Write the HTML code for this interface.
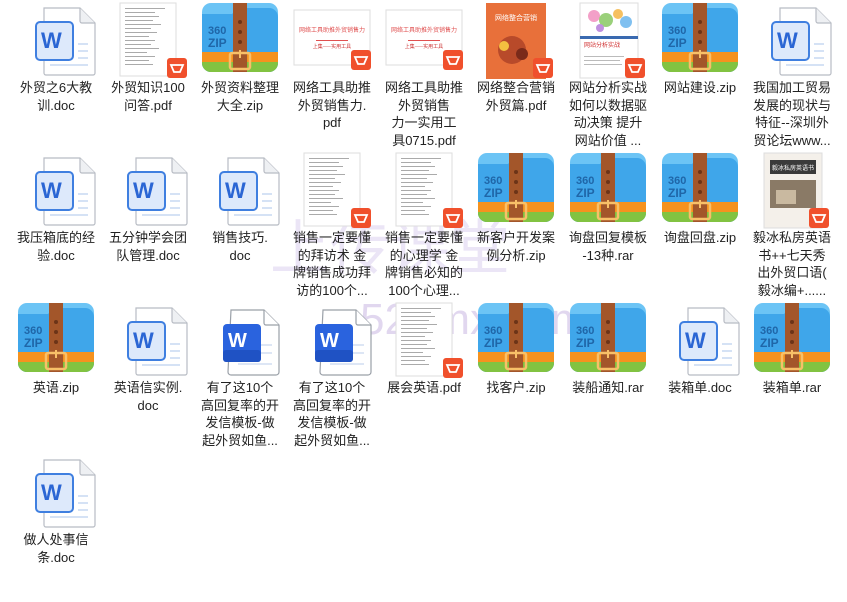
<!DOCTYPE html>
<html><head><meta charset="utf-8"><style>
body{margin:0;width:847px;height:570px;background:#fff;position:relative;overflow:hidden;font-family:"Liberation Sans","Noto Sans CJK SC",sans-serif;}
.c{position:absolute;width:92px;height:150px}
.ic{position:absolute;left:0;top:0;width:92px;height:80px}
.lb{position:absolute;left:-4px;top:79px;width:100px;font-size:13px;line-height:17.5px;color:#222;text-align:center;white-space:nowrap}
.wm{position:absolute;color:rgba(170,140,210,0.35);font-size:40px;white-space:nowrap}
</style></head><body>
<svg width="0" height="0" style="position:absolute">
<defs>
<g id="zip">
<rect x="8" y="3" width="76" height="69" rx="9" fill="#6cc4f5"/>
<path d="M8 14 h30 l6 -6 h31 a9 9 0 0 1 9 9 v46 a9 9 0 0 1 -9 9 h-58 a9 9 0 0 1 -9 -9z" fill="#3fa6ea"/>
<path d="M8 54 h76 v9 a9 9 0 0 1 -9 9 h-58 a9 9 0 0 1 -9 -9z" fill="#82c341"/>
<rect x="8" y="52" width="76" height="10" fill="#f6921e"/>
<rect x="39" y="3" width="14" height="69" fill="#a3562a"/>
<circle cx="46" cy="22" r="2" fill="#6b3418"/><circle cx="46" cy="32" r="2" fill="#6b3418"/><circle cx="46" cy="42" r="2" fill="#6b3418"/>
<rect x="36" y="53" width="20" height="16" rx="2" fill="none" stroke="#f8c068" stroke-width="2.5"/>
<rect x="45" y="50" width="2" height="8" fill="#f8c068"/>
<text x="14" y="34" font-size="11" fill="#1f66a8" font-family="Liberation Sans" font-weight="bold">360</text>
<text x="14" y="47" font-size="12" fill="#1f66a8" font-family="Liberation Sans" font-weight="bold">ZIP</text>
</g>
<g id="doc">
<path d="M34 8 h36 l15 15 v50 a2 2 0 0 1 -2 2 h-47 a2 2 0 0 1 -2 -2z" fill="#fff" stroke="#b8bcc4" stroke-width="1.2"/>
<path d="M70 8 v13 a2 2 0 0 0 2 2 h13" fill="#eef0f3" stroke="#b8bcc4" stroke-width="1.2"/>
<rect x="68" y="43" width="10" height="2" fill="#d5e2f5"/><rect x="68" y="50" width="10" height="2" fill="#d5e2f5"/><rect x="68" y="57" width="10" height="2" fill="#d5e2f5"/><rect x="40" y="64" width="38" height="2" fill="#d5e2f5"/>
<rect x="26" y="22" width="37" height="38" rx="4" fill="#dde9fb" stroke="#3f7fe0" stroke-width="2"/>
<text x="31" y="48" font-size="22" font-weight="bold" fill="#2b66d4" font-family="Liberation Sans">W</text>
</g>
<g id="docb">
<path d="M37 10 h33 l15 15 v47 a3 3 0 0 1 -3 3 h-45 a3 3 0 0 1 -3 -3z" fill="#fff" stroke="#9aa0a8" stroke-width="1.2"/>
<path d="M70 10 v13 a2 2 0 0 0 2 2 h13" fill="#fff" stroke="#9aa0a8" stroke-width="1.2"/>
<rect x="66" y="44" width="12" height="2" fill="#dde6f5"/><rect x="66" y="52" width="12" height="2" fill="#dde6f5"/><rect x="44" y="63" width="34" height="2" fill="#dde6f5"/>
<rect x="29" y="24" width="38" height="38" rx="4" fill="#2a63de"/>
<rect x="29" y="50" width="38" height="12" rx="3" fill="#1f52c4"/>
<text x="34" y="47" font-size="20" font-weight="bold" fill="#fff" font-family="Liberation Sans">W</text>
</g>
<g id="badge">
<rect x="0" y="0" width="20" height="20" rx="3" fill="#f0502c"/>
<path d="M4 7 h12 l-3 7 h-6 z" fill="none" stroke="#fff" stroke-width="1.8"/>
</g>
<g id="pdf">
<rect x="18" y="3" width="56" height="73" fill="#fff" stroke="#ddd"/>
<g fill="#aaa"><rect x="23" y="8" width="40" height="1"/><rect x="23" y="12" width="30" height="1"/><rect x="23" y="16" width="34" height="1"/><rect x="23" y="20" width="28" height="1"/><rect x="23" y="24" width="36" height="1"/><rect x="23" y="28" width="26" height="1"/><rect x="23" y="32" width="32" height="1"/><rect x="23" y="36" width="24" height="1"/><rect x="23" y="40" width="30" height="1"/><rect x="23" y="44" width="26" height="1"/><rect x="23" y="48" width="34" height="1"/><rect x="23" y="52" width="22" height="1"/><rect x="23" y="56" width="30" height="1"/><rect x="23" y="60" width="24" height="1"/><rect x="23" y="64" width="28" height="1"/></g>
<use href="#badge" x="65" y="58"/>
</g>
<g id="pdfslide">
<rect x="8" y="10" width="76" height="55" fill="#fff" stroke="#ddd"/>
<text x="46" y="32" font-size="6" fill="#e05050" text-anchor="middle" font-family="Noto Sans CJK SC">网络工具助推外贸销售力</text>
<rect x="30" y="40" width="32" height="1" fill="#e05050"/>
<text x="46" y="48" font-size="5" fill="#c33" text-anchor="middle" font-family="Noto Sans CJK SC">上集——实用工具</text>
<use href="#badge" x="65" y="50"/>
</g>
</defs></svg>

<div class="wm" style="left:360px;top:295px;font-size:44px">520mx.com</div>
<div class="wm" style="left:270px;top:200px;font-size:60px;color:rgba(190,170,225,0.3)">上传课堂</div>

<!-- Row 1 -->
<div class="c" style="left:10px;top:0"><svg class="ic"><use href="#doc"/></svg><div class="lb">外贸之6大教<br>训.doc</div></div>
<div class="c" style="left:102px;top:0"><svg class="ic"><use href="#pdf"/></svg><div class="lb">外贸知识100<br>问答.pdf</div></div>
<div class="c" style="left:194px;top:0"><svg class="ic"><use href="#zip"/></svg><div class="lb">外贸资料整理<br>大全.zip</div></div>
<div class="c" style="left:286px;top:0"><svg class="ic"><use href="#pdfslide"/></svg><div class="lb">网络工具助推<br>外贸销售力.<br>pdf</div></div>
<div class="c" style="left:378px;top:0"><svg class="ic"><use href="#pdfslide"/></svg><div class="lb">网络工具助推<br>外贸销售<br>力一实用工<br>具0715.pdf</div></div>
<div class="c" style="left:470px;top:0"><svg class="ic"><rect x="16" y="3" width="60" height="76" fill="#e8703a"/><circle cx="42" cy="50" r="14" fill="#b84a2a"/><circle cx="34" cy="46" r="5" fill="#f4c040"/><circle cx="52" cy="54" r="6" fill="#7a2a1a"/><text x="46" y="20" font-size="7" fill="#fff" text-anchor="middle" font-family="Noto Sans CJK SC">网络整合营销</text><use href="#badge" x="63" y="58"/></svg><div class="lb">网络整合营销<br>外贸篇.pdf</div></div>
<div class="c" style="left:562px;top:0"><svg class="ic"><rect x="18" y="3" width="58" height="75" fill="#fff" stroke="#ddd"/><circle cx="32" cy="16" r="6" fill="#f3a0c8"/><circle cx="44" cy="20" r="7" fill="#9ad07a"/><circle cx="56" cy="14" r="5" fill="#f6c060"/><circle cx="64" cy="22" r="6" fill="#80c0f0"/><circle cx="38" cy="28" r="4" fill="#c090e0"/><rect x="18" y="36" width="58" height="3" fill="#3a6ab0"/><text x="22" y="47" font-size="6" fill="#d03030" font-family="Noto Sans CJK SC">网站分析实战</text><g fill="#bbb"><rect x="22" y="56" width="40" height="1"/><rect x="22" y="60" width="36" height="1"/><rect x="22" y="64" width="38" height="1"/></g><use href="#badge" x="63" y="58"/></svg><div class="lb">网站分析实战<br>如何以数据驱<br>动决策 提升<br>网站价值 ...</div></div>
<div class="c" style="left:654px;top:0"><svg class="ic"><use href="#zip"/></svg><div class="lb">网站建设.zip</div></div>
<div class="c" style="left:746px;top:0"><svg class="ic"><use href="#doc"/></svg><div class="lb">我国加工贸易<br>发展的现状与<br>特征--深圳外<br>贸论坛www...</div></div>

<!-- Row 2 -->
<div class="c" style="left:10px;top:150px"><svg class="ic"><use href="#doc"/></svg><div class="lb">我压箱底的经<br>验.doc</div></div>
<div class="c" style="left:102px;top:150px"><svg class="ic"><use href="#doc"/></svg><div class="lb">五分钟学会团<br>队管理.doc</div></div>
<div class="c" style="left:194px;top:150px"><svg class="ic"><use href="#doc"/></svg><div class="lb">销售技巧.<br>doc</div></div>
<div class="c" style="left:286px;top:150px"><svg class="ic"><use href="#pdf"/></svg><div class="lb">销售一定要懂<br>的拜访术 金<br>牌销售成功拜<br>访的100个...</div></div>
<div class="c" style="left:378px;top:150px"><svg class="ic"><use href="#pdf"/></svg><div class="lb">销售一定要懂<br>的心理学 金<br>牌销售必知的<br>100个心理...</div></div>
<div class="c" style="left:470px;top:150px"><svg class="ic"><use href="#zip"/></svg><div class="lb">新客户开发案<br>例分析.zip</div></div>
<div class="c" style="left:562px;top:150px"><svg class="ic"><use href="#zip"/></svg><div class="lb">询盘回复模板<br>-13种.rar</div></div>
<div class="c" style="left:654px;top:150px"><svg class="ic"><use href="#zip"/></svg><div class="lb">询盘回盘.zip</div></div>
<div class="c" style="left:746px;top:150px"><svg class="ic"><rect x="18" y="3" width="58" height="75" fill="#f4f0ea" stroke="#ddd"/><rect x="24" y="10" width="46" height="14" fill="#3a3a3a"/><text x="47" y="20" font-size="6" fill="#fff" text-anchor="middle" font-family="Noto Sans CJK SC">毅冰私房英语书</text><rect x="24" y="30" width="46" height="28" fill="#8a7a66"/><rect x="30" y="40" width="20" height="14" fill="#c9b9a0"/><use href="#badge" x="63" y="58"/></svg><div class="lb">毅冰私房英语<br>书++七天秀<br>出外贸口语(<br>毅冰编+......</div></div>

<!-- Row 3 -->
<div class="c" style="left:10px;top:300px"><svg class="ic"><use href="#zip"/></svg><div class="lb">英语.zip</div></div>
<div class="c" style="left:102px;top:300px"><svg class="ic"><use href="#doc"/></svg><div class="lb">英语信实例.<br>doc</div></div>
<div class="c" style="left:194px;top:300px"><svg class="ic"><use href="#docb"/></svg><div class="lb">有了这10个<br>高回复率的开<br>发信模板-做<br>起外贸如鱼...</div></div>
<div class="c" style="left:286px;top:300px"><svg class="ic"><use href="#docb"/></svg><div class="lb">有了这10个<br>高回复率的开<br>发信模板-做<br>起外贸如鱼...</div></div>
<div class="c" style="left:378px;top:300px"><svg class="ic"><use href="#pdf"/></svg><div class="lb">展会英语.pdf</div></div>
<div class="c" style="left:470px;top:300px"><svg class="ic"><use href="#zip"/></svg><div class="lb">找客户.zip</div></div>
<div class="c" style="left:562px;top:300px"><svg class="ic"><use href="#zip"/></svg><div class="lb">装船通知.rar</div></div>
<div class="c" style="left:654px;top:300px"><svg class="ic"><use href="#doc"/></svg><div class="lb">装箱单.doc</div></div>
<div class="c" style="left:746px;top:300px"><svg class="ic"><use href="#zip"/></svg><div class="lb">装箱单.rar</div></div>

<!-- Row 4 -->
<div class="c" style="left:10px;top:452px"><svg class="ic"><use href="#doc"/></svg><div class="lb">做人处事信<br>条.doc</div></div>
</body></html>
